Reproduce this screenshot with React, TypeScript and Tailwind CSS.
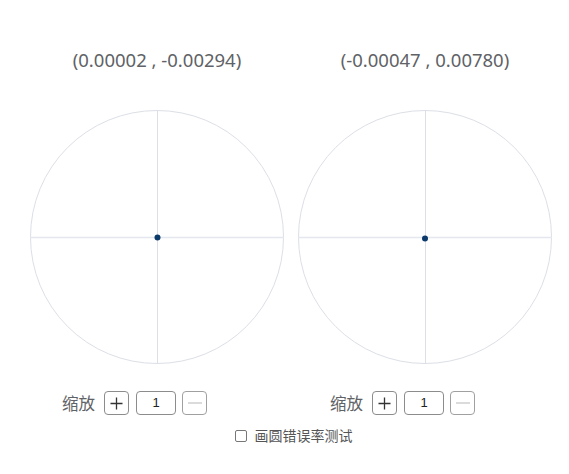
import React from "react";

function Target({ label, dot }: { label: string; dot: [number, number] }) {
  return (
    <div className="flex flex-col items-center w-[268px]">
      <div className="text-[18.5px] text-[#606266] leading-none h-[20px] mt-[51px]" style={{ fontFamily: '"Noto Sans", sans-serif' }}>
        {label}
      </div>
      <svg width="256" height="256" viewBox="0 0 256 256" className="mt-[38px]">
        <circle cx="128" cy="128" r="126.5" fill="none" stroke="#dcdfe6" strokeWidth="1" />
        <line x1="128.5" y1="1" x2="128.5" y2="255" stroke="#dcdfe6" strokeWidth="1" />
        <line x1="1" y1="128.5" x2="255" y2="128.5" stroke="#e4e7ed" strokeWidth="1.5" />
        <circle cx={128.5 + dot[0]} cy={128.5 + dot[1]} r="3" fill="#0b3a6b" />
      </svg>
      <div className="flex items-center self-start ml-[39px] mt-[26px] h-[24px]">
        <span className="text-[16.5px] text-[#606266] mr-[9px]" style={{ fontFamily: '"Noto Sans CJK SC", sans-serif' }}>缩放</span>
        <button className="w-[25px] h-[24px] border border-[#8c8c8c] rounded-[4px] flex items-center justify-center bg-white">
          <svg width="13" height="13" viewBox="0 0 13 13"><path d="M6.5 0.5v12M0.5 6.5h12" stroke="#333" strokeWidth="1.3" /></svg>
        </button>
        <div className="w-[40px] h-[24px] ml-[7px] border border-[#8c8c8c] rounded-[4px] flex items-center justify-center text-[13px] text-[#222]" style={{ fontFamily: '"Liberation Sans", sans-serif' }}>1</div>
        <button className="w-[25px] h-[24px] ml-[6px] border border-[#a0a0a0] rounded-[4px] flex items-center justify-center bg-white">
          <svg width="14" height="2" viewBox="0 0 14 2"><path d="M0 1h14" stroke="#c8c8c8" strokeWidth="1.3" /></svg>
        </button>
      </div>
    </div>
  );
}

export default function App() {
  return (
    <div className="w-[569px] h-[474px] bg-white flex flex-col">
      <div className="flex pl-[23px]">
        <Target label="(0.00002 , -0.00294)" dot={[0, 0]} />
        <Target label="(-0.00047 , 0.00780)" dot={[-0.5, 1]} />
      </div>
      <div className="flex items-center justify-center mt-[10px] ml-[18px]" style={{ fontFamily: '"Noto Sans CJK SC", sans-serif' }}>
        <span className="w-[12px] h-[12px] border border-[#777] rounded-[2px] mr-[8px]" />
        <span className="text-[14px] text-[#555]">画圆错误率测试</span>
      </div>
    </div>
  );
}
